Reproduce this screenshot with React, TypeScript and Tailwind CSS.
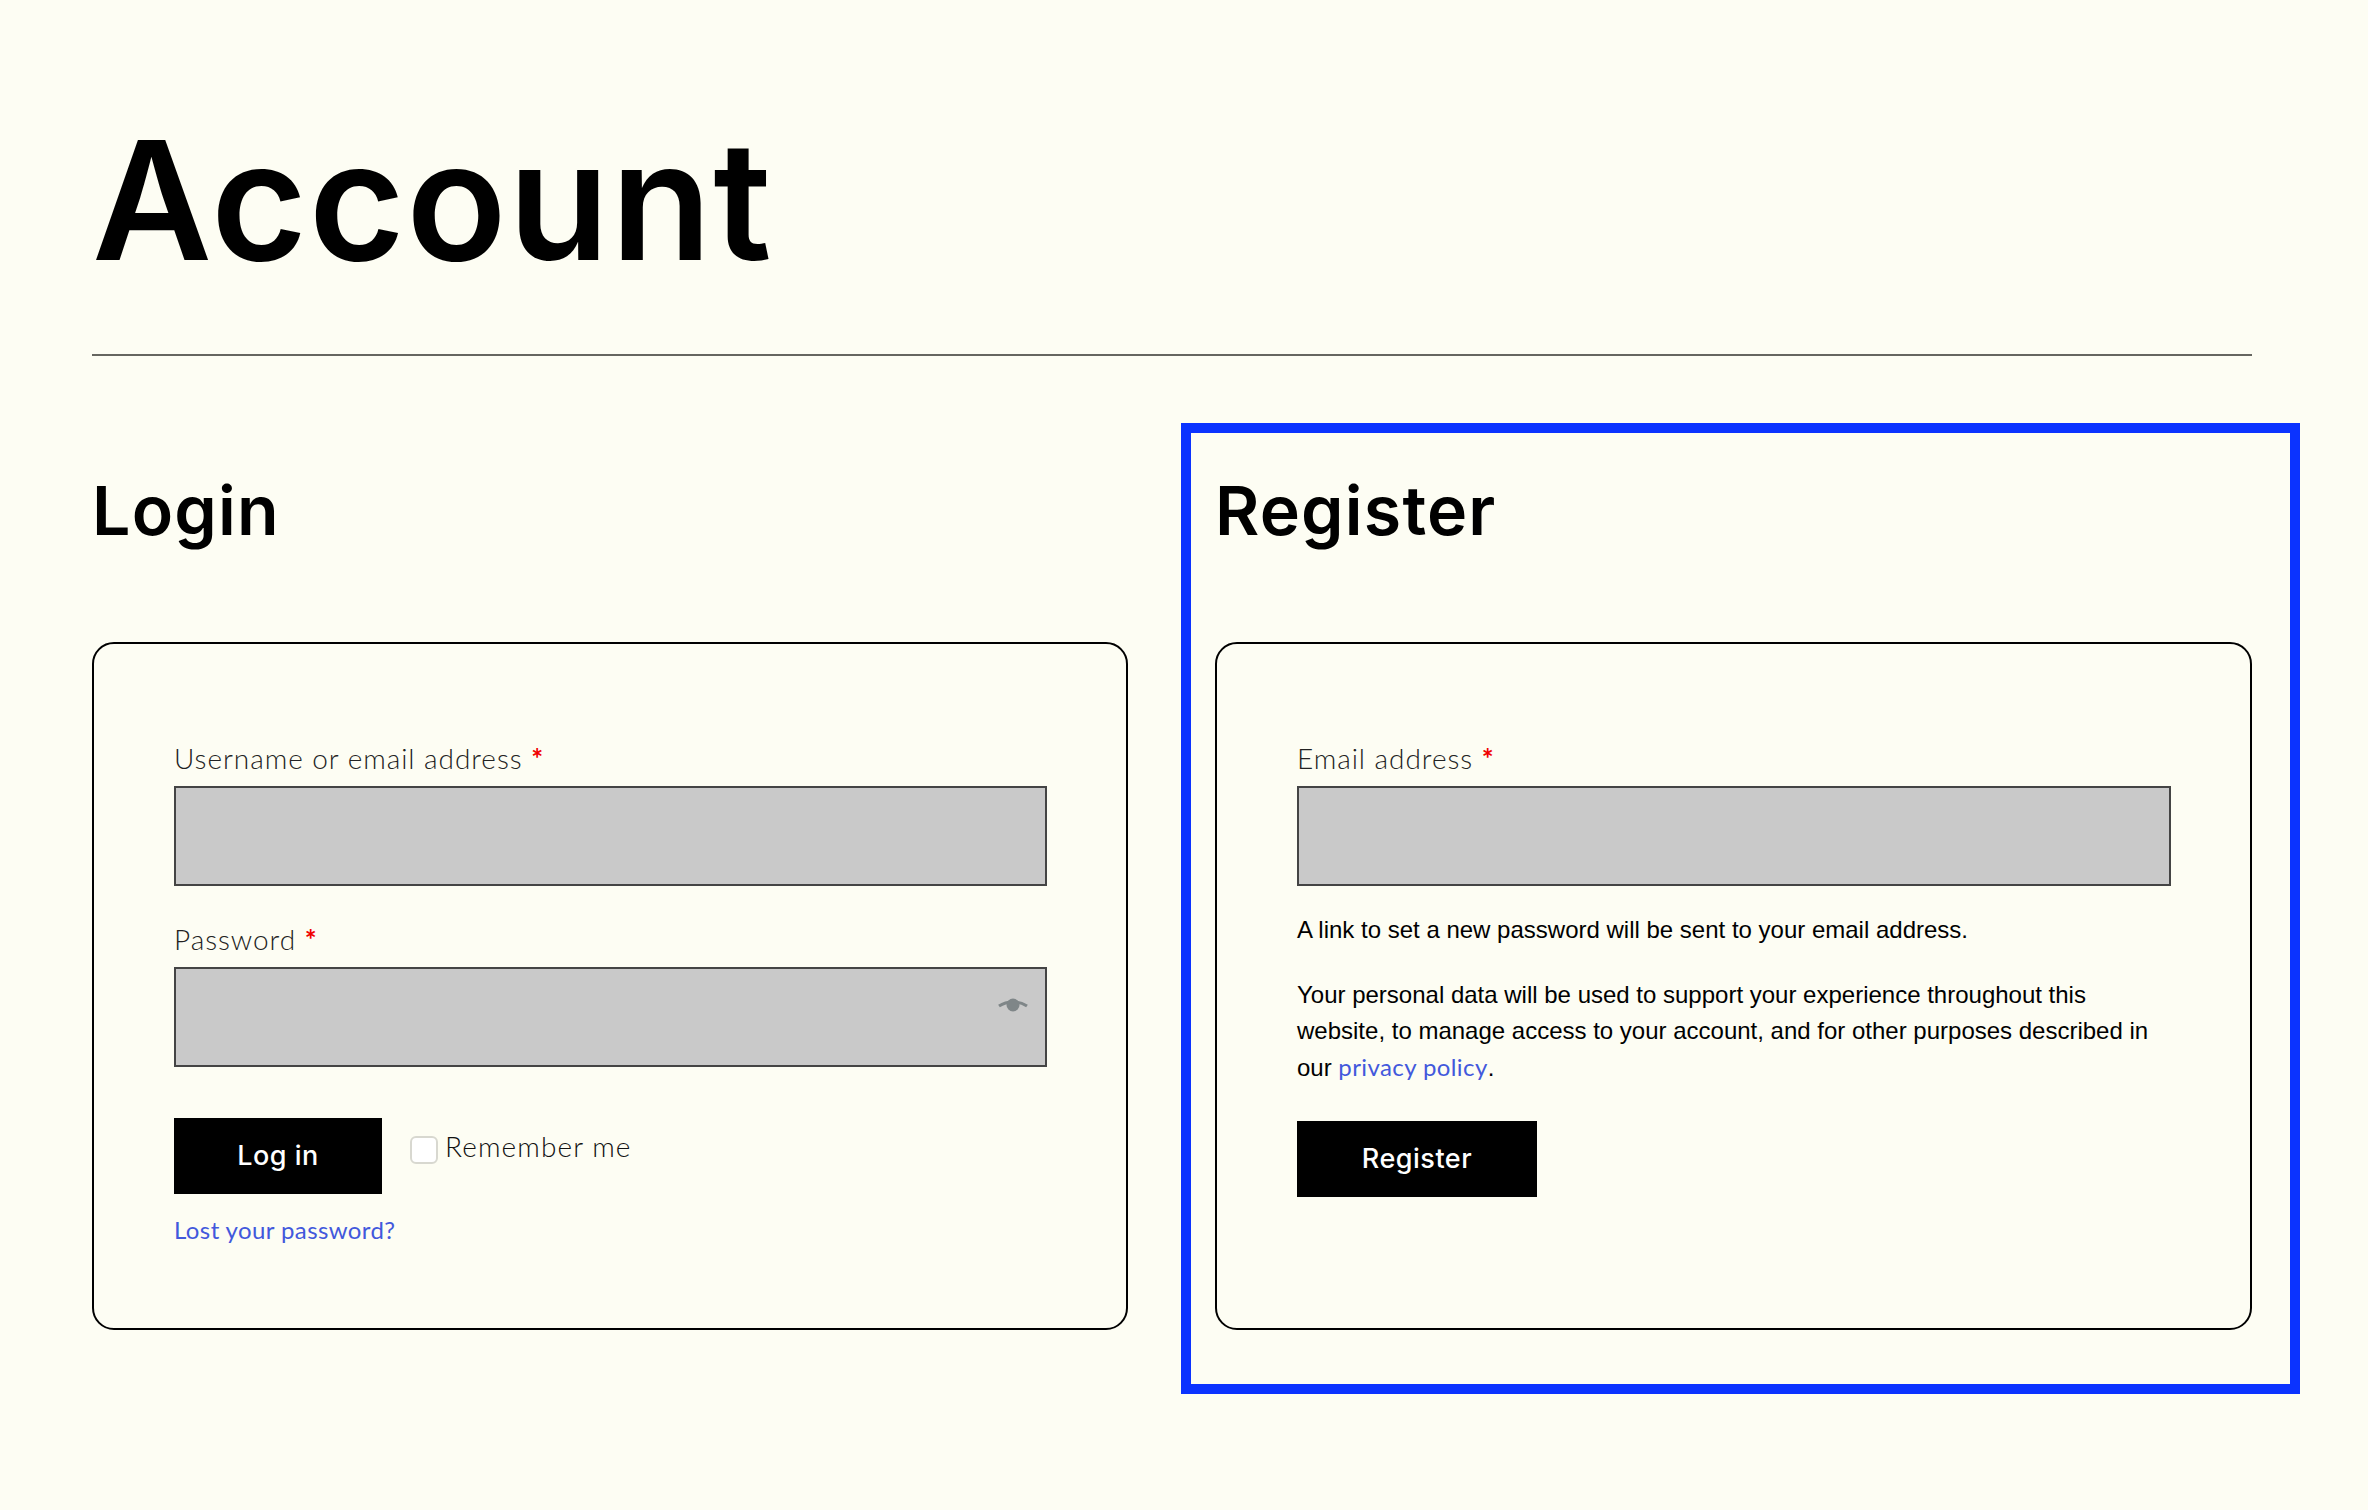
import React from "react";

const head = "font-['Inter','Liberation_Sans',sans-serif]";
const label = "font-['Lato','Liberation_Sans',sans-serif]";

function Field({ text, eye }: { text: string; eye?: boolean }) {
  return (
    <div className="flex flex-col">
      <label className={`${label} h-[36px] text-[28px] leading-[36px] font-light tracking-[0.95px] text-[#222222]`}>
        {text} <span className="font-bold text-[#f00000]">*</span>
      </label>
      <div className="relative mt-[10px]">
        <input type={eye ? "password" : "text"} className="block h-[100px] w-full border-2 border-[#444444] bg-[#c9c9c9] outline-none" />
        {eye && (
          <svg viewBox="0 0 30 14" className="absolute right-[19px] top-[31px] h-[14px] w-[30px]" fill="none">
            <path d="M1 8C9 2.5 21 2.5 29 8" stroke="#7f8688" strokeWidth="3" />
            <circle cx="15" cy="7" r="6.5" fill="#7f8688" />
          </svg>
        )}
      </div>
    </div>
  );
}

function Column({ title, children }: { title: string; children: React.ReactNode }) {
  return (
    <section className="flex flex-col">
      <h2 className={`${head} h-[184px] pt-[2px] text-[68px] leading-[100px] font-[560] tracking-[1.2px] text-black`}>{title}</h2>
      <div className="flex h-[688px] flex-col rounded-[22px] border-2 border-black pl-[80px] pr-[79px] pt-[96px]">{children}</div>
    </section>
  );
}

export default function App() {
  return (
    <main className="relative h-[1510px] overflow-hidden bg-[#fdfdf3] pl-[92px]">
      <div className="w-[2160px]">
        <h1 className={`${head} h-[354px] pt-[100px] text-[165px] leading-[200px] font-[560] tracking-[1.5px] text-black`}>Account</h1>
        <hr className="h-[2px] border-0 bg-[#666660]" />
        <div className="grid grid-cols-[1036px_1037px] gap-[87px] pt-[102px]">
          <Column title="Login">
            <Field text="Username or email address" />
            <div className="mt-[35px]">
              <Field text="Password" eye />
            </div>
            <div className="mt-[51px] flex items-start">
              <button className={`${head} h-[76px] w-[208px] bg-black text-[27px] font-medium tracking-[0.5px] text-white`}>Log in</button>
              <label className={`${label} ml-[28px] mt-[10px] flex items-start text-[28px] leading-[36px] font-light tracking-[1.1px] text-[#111111]`}>
                <input type="checkbox" className="mr-[7px] mt-[8px] h-[28px] w-[28px] appearance-none rounded-[6px] border-2 border-[#d8d8d0] bg-white" />
                Remember me
              </label>
            </div>
            <a className={`${label} mt-[20px] text-[24px] leading-[32px] font-normal tracking-[0.4px] text-[#4258dc]`}>Lost your password?</a>
          </Column>
          <Column title="Register">
            <Field text="Email address" />
            <p className="mt-[26px] font-['Liberation_Sans',sans-serif] text-[24px] leading-[36px] text-black">A link to set a new password will be sent to your email address.</p>
            <p className="mt-[29px] font-['Liberation_Sans',sans-serif] text-[24px] leading-[36px] text-black">
              Your personal data will be used to support your experience throughout this website, to manage access to your account, and for other purposes described in our{" "}
              <a className={`${label} font-normal tracking-[0.4px] text-[#4258dc]`}>privacy policy</a>.
            </p>
            <button className={`${head} mt-[35px] h-[76px] w-[240px] bg-black text-[27px] font-medium tracking-[0.5px] text-white`}>Register</button>
          </Column>
        </div>
      </div>
      <div className="absolute left-[1181px] top-[423px] h-[971px] w-[1119px] border-[10px] border-[#0b33ff]" />
    </main>
  );
}
